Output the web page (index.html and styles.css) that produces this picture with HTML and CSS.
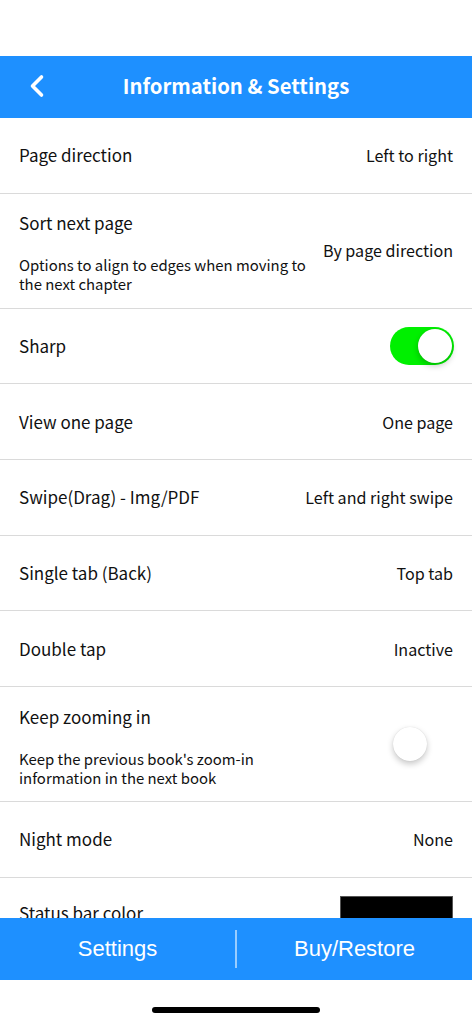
FILE: index.html
```html
<!DOCTYPE html>
<html>
<head>
<meta charset="utf-8">
<link rel="stylesheet" href="styles.css">
</head>
<body>
<div class="screen">
  <div class="statusbar"></div>
  <header class="navbar">
    <span class="back">
      <svg width="20" height="24" viewBox="0 0 20 24"><path d="M14.5 3 L5.5 12 L14.5 21" fill="none" stroke="#fff" stroke-width="3.6" stroke-linecap="round" stroke-linejoin="round"/></svg>
    </span>
    <h1 class="title">Information &amp; Settings</h1>
  </header>
  <main class="list">
    <div class="row"><span class="label">Page direction</span><span class="value">Left to right</span></div>
    <div class="row tall">
      <div class="textcol">
        <span class="label">Sort next page</span>
        <span class="desc">Options to align to edges when moving to the next chapter</span>
      </div>
      <span class="value up">By page direction</span>
    </div>
    <div class="row"><span class="label">Sharp</span><span class="switch on"><span class="knob"></span></span></div>
    <div class="row"><span class="label">View one page</span><span class="value">One page</span></div>
    <div class="row"><span class="label">Swipe(Drag) - Img/PDF</span><span class="value">Left and right swipe</span></div>
    <div class="row"><span class="label">Single tab (Back)</span><span class="value">Top tab</span></div>
    <div class="row"><span class="label">Double tap</span><span class="value">Inactive</span></div>
    <div class="row tall">
      <div class="textcol">
        <span class="label">Keep zooming in</span>
        <span class="desc">Keep the previous book's zoom-in information in the next book</span>
      </div>
      <span class="switch off"><span class="knob"></span></span>
    </div>
    <div class="row"><span class="label">Night mode</span><span class="value">None</span></div>
    <div class="row last"><span class="label">Status bar color</span><span class="swatch"></span></div>
  </main>
  <footer class="tabbar">
    <span class="tab">Settings</span>
    <span class="divider"></span>
    <span class="tab">Buy/Restore</span>
  </footer>
  <div class="homearea"><span class="homebar"></span></div>
</div>
</body>
</html>
```
FILE: styles.css
```css
* { box-sizing: border-box; }
html, body { margin: 0; padding: 0; background: #fff; }
body { font-family: "Noto Sans CJK KR", "Noto Sans", sans-serif; color: #111; }
.screen { width: 472px; height: 1024px; display: flex; flex-direction: column; overflow: hidden; }
.statusbar { height: 56px; flex: none; }
.navbar { height: 62px; flex: none; background: #1e90ff; position: relative; display: flex; align-items: center; justify-content: center; padding-bottom: 4px; }
.back { position: absolute; left: 27px; top: 18px; width: 20px; height: 24px; display: block; }
.back svg { display: block; }
.title { margin: 0; color: #fff; font-size: 20.3px; font-weight: 700; line-height: 1; }
.list { flex: 1; overflow: hidden; display: flex; flex-direction: column; }
.row { flex: none; height: 75.7px; border-bottom: 1px solid #dadada; display: flex; align-items: center; justify-content: space-between; padding: 0 19px 0 19px; }
.row.tall { height: 115px; padding-top: 4px; }
.row.last { border-bottom: none; align-items: flex-start; padding-top: 18px; }
.label { font-size: 17px; line-height: 22px; }
.value { font-size: 16.1px; line-height: 20px; text-align: right; white-space: nowrap; }
.value.up { margin-top: -6px; }
.textcol { display: flex; flex-direction: column; flex: 0 0 292px; }
.textcol .label { margin-bottom: 21px; }
.desc { font-size: 14.9px; line-height: 19px; }
.row.last .label { margin-top: 6px; }
.switch { width: 64px; height: 38px; border-radius: 19px; position: relative; flex: none; margin-right: -1px; }
.switch.on { background: #00f000; }
.switch.off { background: transparent; margin-right: -2px; margin-top: -4px; }
.knob { position: absolute; top: 2px; width: 34px; height: 34px; border-radius: 50%; background: #fff; box-shadow: 0 3px 6px rgba(0,0,0,0.22), 0 0 1px rgba(0,0,0,0.15); }
.switch.on .knob { right: 2px; }
.switch.off .knob { left: 2px; }
.swatch { width: 113px; height: 30px; background: #000; border: 1px solid #555; }
.tabbar { height: 62px; flex: none; background: #1e90ff; display: flex; align-items: center; }
.tab { flex: 1; text-align: center; color: #fff; font-family: "Liberation Sans", Arial, sans-serif; font-size: 22px; line-height: 1; }
.divider { width: 2px; height: 38px; background: rgba(255,255,255,0.55); flex: none; }
.homearea { height: 44px; flex: none; display: flex; justify-content: center; align-items: flex-start; padding-top: 27px; }
.homebar { width: 168px; height: 6px; background: #000; border-radius: 3px; display: block; }
```
